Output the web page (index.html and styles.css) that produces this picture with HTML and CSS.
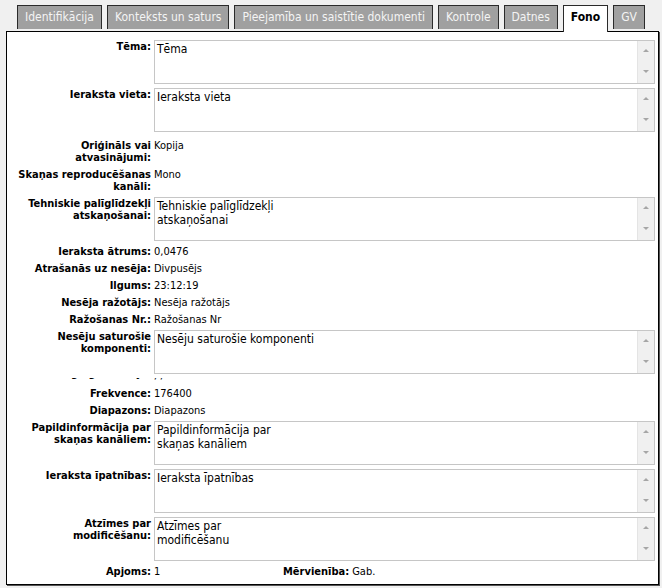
FILE: index.html
```html
<!DOCTYPE html>
<html lang="lv">
<head>
    <meta charset="UTF-8">
    <title>Fono</title>
    <link rel="stylesheet" href="styles.css">
</head>
<body>
    <div class="tabs">
        <div class="tab">Identifikācija</div>
        <div class="tab">Konteksts un saturs</div>
        <div class="tab">Pieejamība un saistītie dokumenti</div>
        <div class="tab">Kontrole</div>
        <div class="tab">Datnes</div>
        <div class="tab active">Fono</div>
        <div class="tab">GV</div>
    </div>

    <div class="panel">
        <div class="form">
            <div class="label">Tēma:</div>
            <div class="textbox">
                <div class="textbox-text">Tēma</div>
                <div class="scroll"><span class="arrow-up"></span><span class="arrow-down"></span></div>
            </div>

            <div class="label">Ieraksta vieta:</div>
            <div class="textbox">
                <div class="textbox-text">Ieraksta vieta</div>
                <div class="scroll"><span class="arrow-up"></span><span class="arrow-down"></span></div>
            </div>

            <div class="label spaced">Oriģināls vai atvasinājumi:</div>
            <div class="value spaced">Kopija</div>

            <div class="label">Skaņas reproducēšanas kanāli:</div>
            <div class="value">Mono</div>

            <div class="label">Tehniskie palīglīdzekļi atskaņošanai:</div>
            <div class="textbox">
                <div class="textbox-text">Tehniskie palīglīdzekļi<br>atskaņošanai</div>
                <div class="scroll"><span class="arrow-up"></span><span class="arrow-down"></span></div>
            </div>

            <div class="label">Ieraksta ātrums:</div>
            <div class="value">0,0476</div>

            <div class="label">Atrašanās uz nesēja:</div>
            <div class="value">Divpusējs</div>

            <div class="label">Ilgums:</div>
            <div class="value">23:12:19</div>

            <div class="label">Nesēja ražotājs:</div>
            <div class="value">Nesēja ražotājs</div>

            <div class="label">Ražošanas Nr.:</div>
            <div class="value">Ražošanas Nr</div>

            <div class="label">Nesēju saturošie komponenti:</div>
            <div class="textbox">
                <div class="textbox-text">Nesēju saturošie komponenti</div>
                <div class="scroll"><span class="arrow-up"></span><span class="arrow-down"></span></div>
            </div>

            <!-- row hidden under the next one, only descenders show -->
            <div class="label clipped"><span>Paraugu ģenerācija:</span></div>
            <div class="value clipped"><span>ļ ļ</span></div>

            <div class="label">Frekvence:</div>
            <div class="value">176400</div>

            <div class="label">Diapazons:</div>
            <div class="value">Diapazons</div>

            <div class="label">Papildinformācija par skaņas kanāliem:</div>
            <div class="textbox">
                <div class="textbox-text">Papildinformācija par<br>skaņas kanāliem</div>
                <div class="scroll"><span class="arrow-up"></span><span class="arrow-down"></span></div>
            </div>

            <div class="label">Ieraksta īpatnības:</div>
            <div class="textbox">
                <div class="textbox-text">Ieraksta īpatnības</div>
                <div class="scroll"><span class="arrow-up"></span><span class="arrow-down"></span></div>
            </div>

            <div class="label">Atzīmes par modificēšanu:</div>
            <div class="textbox">
                <div class="textbox-text">Atzīmes par<br>modificēšanu</div>
                <div class="scroll"><span class="arrow-up"></span><span class="arrow-down"></span></div>
            </div>

            <div class="label">Apjoms:</div>
            <div class="value pair">
                <span class="pair-first">1</span>
                <span class="inline-label">Mērvienība:</span>
                <span>Gab.</span>
            </div>
        </div>
    </div>
</body>
</html>
```

FILE: styles.css
```css
* {
    margin: 0;
    padding: 0;
    box-sizing: border-box;
}

body {
    background-color: #f0f0f0;
    font-family: 'DejaVu Sans Condensed', 'DejaVu Sans', sans-serif;
    font-stretch: condensed;
    color: #000;
    width: 662px;
    height: 588px;
    overflow: hidden;
}

.tabs {
    display: flex;
    gap: 5px;
    padding: 5px 0 0 17px;
    height: 31px;
    position: relative;
    z-index: 1;
}

.tab {
    height: 24px;
    padding: 0 7px;
    border: 1px solid #2a2a2a;
    border-bottom: none;
    background-color: #a0a0a0;
    color: #f4f4f4;
    font-size: 12px;
    line-height: 22px;
}

.tab.active {
    height: 27px;
    background-color: #fff;
    color: #000;
    font-weight: bold;
}

.panel {
    margin: 0 3px 0 6px;
    height: 554px;
    border: 1px solid #000;
    box-shadow: 1px 1px 0 #555;
    background-color: #fff;
    padding: 7.5px 3px 0 0;
}

.form {
    display: grid;
    grid-template-columns: 144px 1fr;
    column-gap: 3px;
    row-gap: 4px;
}

.label {
    text-align: right;
    font-weight: bold;
    font-size: 11px;
    line-height: 12px;
    padding-top: 1px;
}

.value {
    font-size: 11px;
    line-height: 12px;
    min-height: 13px;
    padding-top: 1px;
}

.spaced {
    margin-top: 3.5px;
}

.clipped {
    height: 5px;
    min-height: 0;
    overflow: hidden;
    padding-top: 0;
}

.clipped span {
    display: block;
    line-height: 12.5px;
    margin-top: -10px;
}

.textbox {
    display: flex;
    height: 44px;
    border: 1px solid #c6c6c6;
    background-color: #fff;
}

.textbox-text {
    flex: 1;
    padding: 1px 2px;
    font-size: 12px;
    line-height: 14px;
}

.scroll {
    width: 17px;
    background-color: #f0f0f0;
    border-left: 1px solid #e4e4e4;
    display: flex;
    flex-direction: column;
    justify-content: space-between;
    align-items: center;
    padding: 8px 0 10px;
}

.arrow-up {
    width: 0;
    height: 0;
    border-left: 3px solid transparent;
    border-right: 3px solid transparent;
    border-bottom: 3px solid #a6a6a6;
}

.arrow-down {
    width: 0;
    height: 0;
    border-left: 3px solid transparent;
    border-right: 3px solid transparent;
    border-top: 3px solid #a6a6a6;
}

.pair {
    display: flex;
}

.pair-first {
    width: 129px;
}

.inline-label {
    font-weight: bold;
    margin-right: 3px;
}
```
